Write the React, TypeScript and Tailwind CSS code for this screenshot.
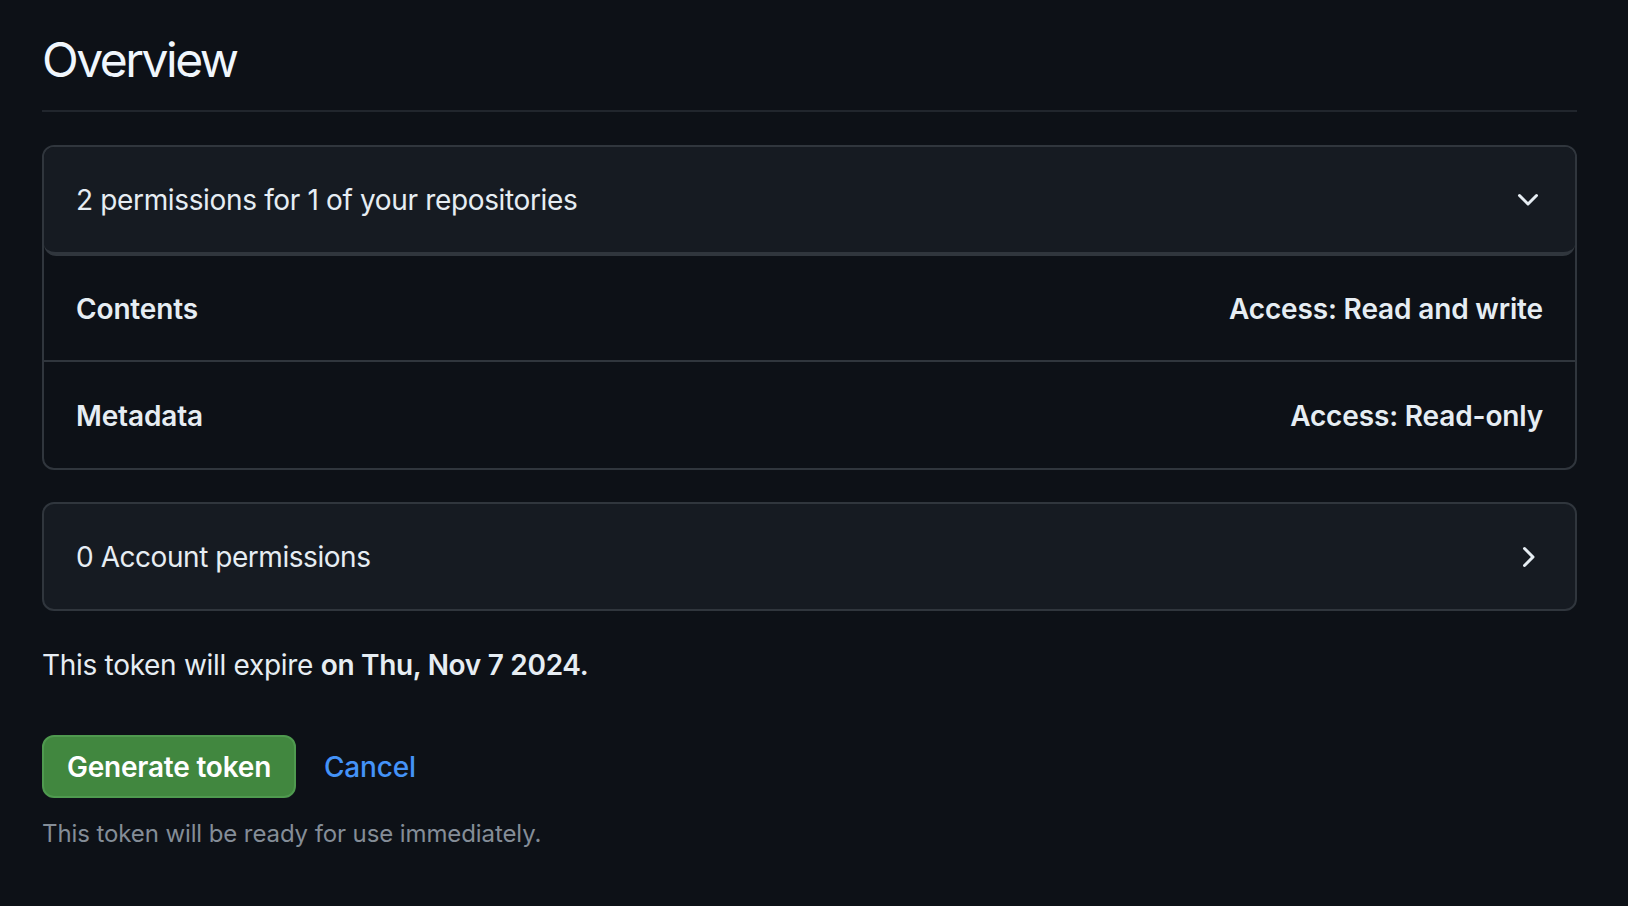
import React from "react";

const font = { fontFamily: "Inter, 'Noto Sans', 'Liberation Sans', sans-serif" };

function ChevronDown() {
  return (
    <svg width="32" height="32" viewBox="0 0 16 16" fill="#e6edf3">
      <path d="M12.78 5.22a.749.749 0 0 1 0 1.06l-4.25 4.25a.749.749 0 0 1-1.06 0L3.22 6.28a.749.749 0 1 1 1.06-1.06L8 8.939l3.72-3.719a.749.749 0 0 1 1.06 0Z" />
    </svg>
  );
}

function ChevronRight() {
  return (
    <svg width="32" height="32" viewBox="0 0 16 16" fill="#e6edf3">
      <path d="M6.22 3.22a.75.75 0 0 1 1.06 0l4.25 4.25a.75.75 0 0 1 0 1.06l-4.25 4.25a.751.751 0 0 1-1.042-.018.751.751 0 0 1-.018-1.042L9.94 8 6.22 4.28a.75.75 0 0 1 0-1.06Z" />
    </svg>
  );
}

export default function App() {
  return (
    <div
      className="min-h-[906px] w-full bg-[#0d1117] text-[#e6edf3] pl-[42px] pr-[51px] pt-[24px]"
      style={font}
    >
      <div className="border-b-2 border-[#21262d] pb-[14px]">
        <h2 className="text-[48px] leading-[72px] font-normal text-[#f0f6fc] tracking-[-2.5px]">Overview</h2>
      </div>

      <div className="mt-[33px] rounded-[12px] border-2 border-[#30363d] overflow-hidden">
        <div className="h-[109px] flex items-center justify-between bg-[#161b22] border-b-[4px] border-[#30363d] pl-[32px] pr-[31px] rounded-b-[12px]">
          <span className="text-[28px] leading-[42px] tracking-[-0.35px]">2 permissions for 1 of your repositories</span>
          <ChevronDown />
        </div>
        <div className="h-[106px] pt-[2px] flex items-center justify-between border-b-2 border-[#30363d] px-[32px] text-[28px] font-semibold tracking-[-0.15px]">
          <span>Contents</span>
          <span>Access: Read and write</span>
        </div>
        <div className="h-[106px] pt-[2px] flex items-center justify-between px-[32px] text-[28px] font-semibold tracking-[-0.15px]">
          <span>Metadata</span>
          <span>Access: Read-only</span>
        </div>
      </div>

      <div className="mt-[32px] h-[109px] rounded-[12px] border-2 border-[#30363d] bg-[#161b22] flex items-center justify-between pl-[32px] pr-[32px]">
        <span className="text-[28px] leading-[42px] tracking-[-0.45px]">0 Account permissions</span>
        <ChevronRight />
      </div>

      <p className="mt-[33px] text-[28px] leading-[42px] tracking-[-0.3px]">
        This token will expire <span className="font-semibold">on Thu, Nov 7 2024.</span>
      </p>

      <div className="mt-[49px] flex items-center gap-[28px]">
        <button className="h-[63px] w-[254px] rounded-[12px] border-2 border-[#4f9a4f] bg-[#41873f] text-white text-[28px] font-semibold tracking-[-0.2px] flex items-center justify-center">
          Generate token
        </button>
        <a className="text-[28px] font-medium text-[#4493f8] tracking-[-0.2px]">Cancel</a>
      </div>

      <p className="mt-[18px] text-[24px] leading-[36px] text-[#848d97] tracking-[-0.1px]">
        This token will be ready for use immediately.
      </p>
    </div>
  );
}
